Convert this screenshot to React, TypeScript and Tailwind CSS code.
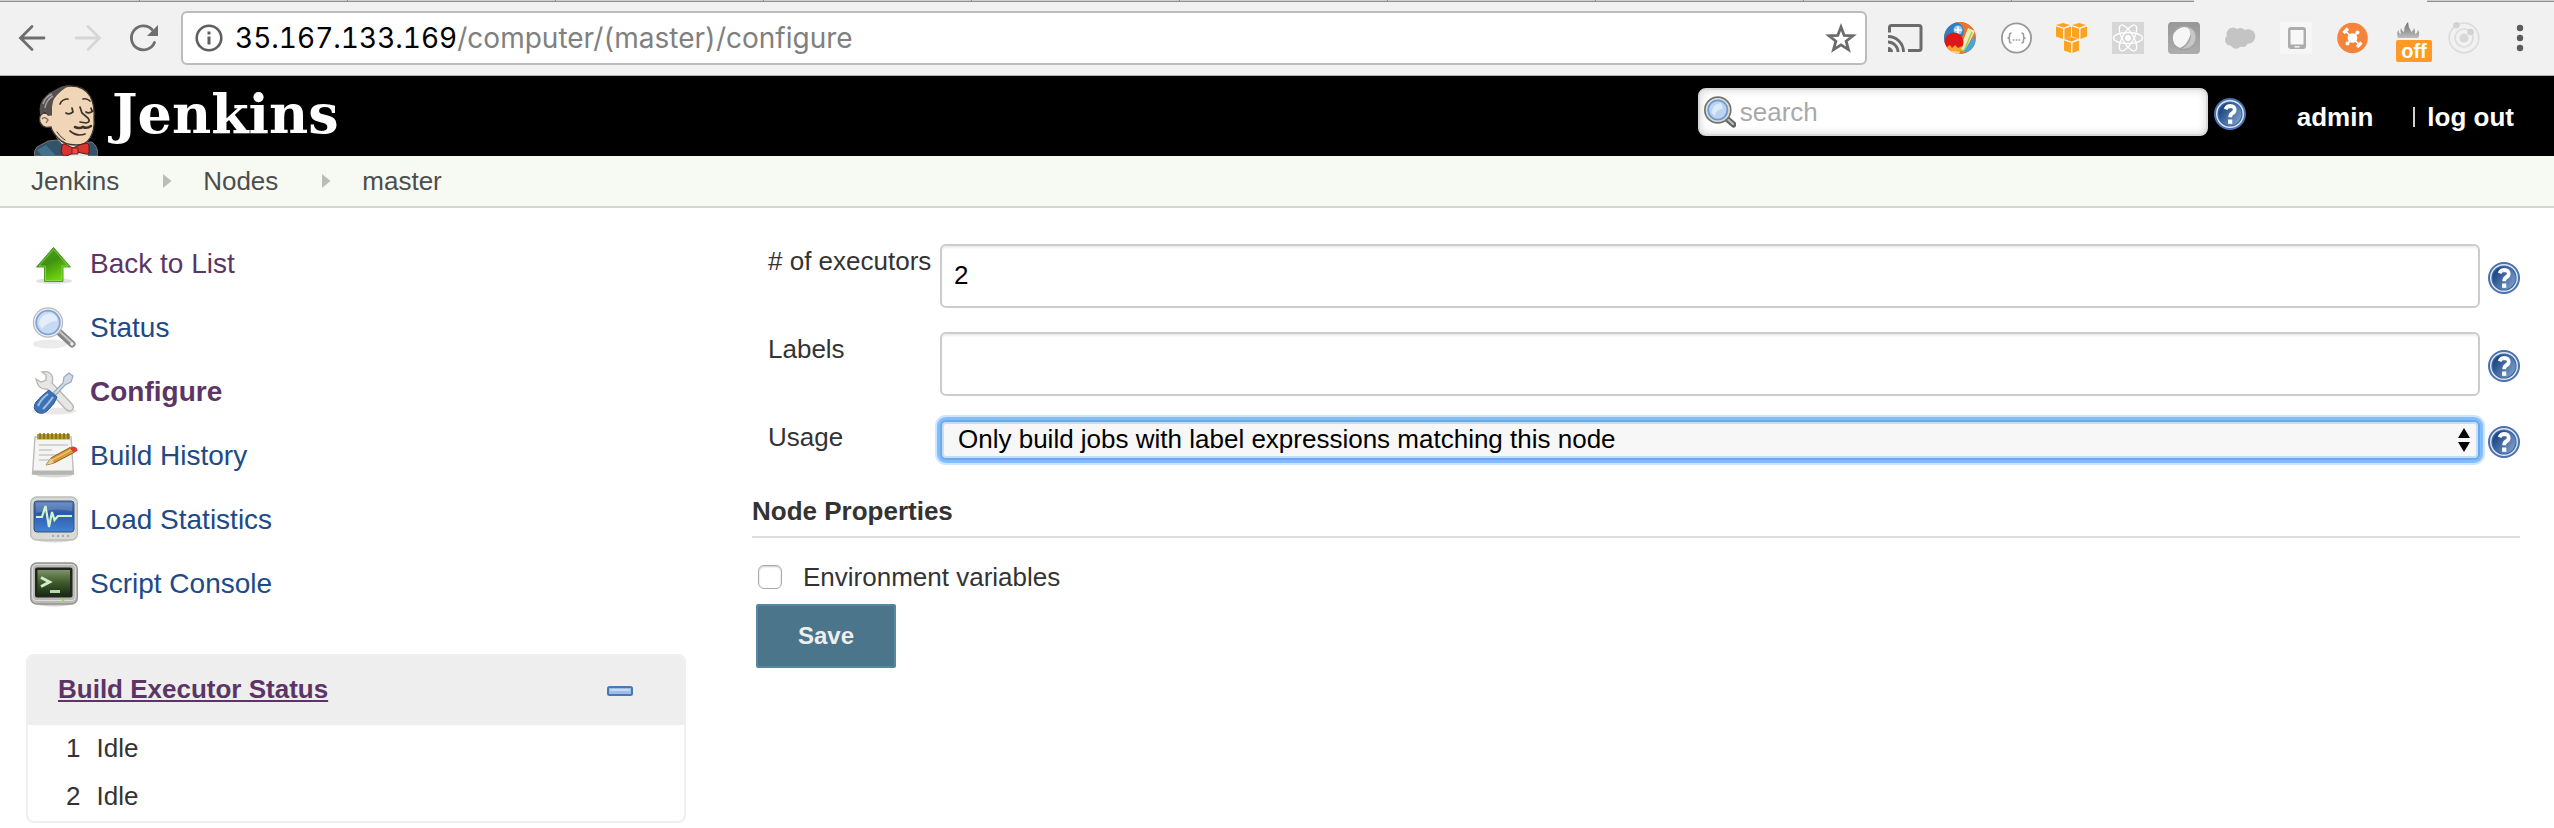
import React from "react";

type IconProps = { className?: string };

/* ---------- browser toolbar icons ---------- */

const BackIcon = () => (
  <svg viewBox="0 0 32 32" className="size-8" fill="none" stroke="#6e6e6e" strokeWidth="2.8" strokeLinecap="round">
    <path d="M28 16H5M16 4.500L4.500 16L16 27.500" />
  </svg>
);
const ForwardIcon = () => (
  <svg viewBox="0 0 32 32" className="size-8" fill="none" stroke="#d6d6d6" strokeWidth="2.800" strokeLinecap="round">
    <path d="M4 16H27M16 4.500L27.500 16L16 27.500" />
  </svg>
);
const ReloadIcon = () => (
  <svg viewBox="0 0 32 32" className="size-8" fill="none">
    <path d="M26.500 20.500A12 12 0 1 1 24 7.500" stroke="#6e6e6e" strokeWidth="2.800" strokeLinecap="round" />
    <path d="M30 3V14H19Z" fill="#6e6e6e" />
  </svg>
);
const InfoIcon = () => (
  <svg viewBox="0 0 28 28" className="size-7 shrink-0">
    <circle cx="14" cy="14" r="12.300" fill="none" stroke="#5f5f5f" strokeWidth="2.600" />
    <path d="M12.500 7.500h3v3h-3zM12.500 12.500h3v8h-3z" fill="#5f5f5f" />
  </svg>
);
const StarIcon = () => (
  <svg viewBox="0 0 32 32" className="size-8" fill="none" stroke="#6b6b6b" strokeWidth="2.800">
    <path d="M16 5L19.200 13.400L28 13.800L21.100 19.200L23.500 27.700L16 22.900L8.500 27.700L10.900 19.200L4 13.800L12.800 13.400Z" />
  </svg>
);
const CastIcon = () => (
  <svg viewBox="0 0 36 32" className="h-8 w-9" fill="none" stroke="#6b6b6b" strokeWidth="3">
    <path d="M1.500 10.500V5.500Q1.500 3.500 3.500 3.500H31Q33 3.500 33 5.500V26.500Q33 28.500 31 28.500H20" />
    <path d="M0 14.500A15.500 15.500 0 0 1 15.500 30M0 20A10 10 0 0 1 10 30" strokeWidth="2.800" />
    <path d="M0 25A5 5 0 0 1 5 30H0Z" fill="#6b6b6b" stroke="none" />
  </svg>
);
const PaletteIcon = () => (
  <svg viewBox="0 0 32 32" className="size-8">
    <defs>
      <clipPath id="ball"><circle cx="16" cy="16" r="16" /></clipPath>
    </defs>
    <g clipPath="url(#ball)">
      <rect width="32" height="32" fill="#e8723c" />
      <path d="M0 0H12Q22 3 19 14L8 14L0 22Z" fill="#2f7fc6" />
      <path d="M13 0Q24 3 23 11L32 8L22 0Z" fill="#e9762f" />
      <circle cx="14" cy="8" r="4.500" fill="#9cc9ee" />
      <path d="M14 4.500v7M10.500 8h7" stroke="#fff" strokeWidth="1.600" />
      <path d="M24 6L31 9L21 29L16 27Z" fill="#e9efb0" />
      <path d="M28 10L20 29L17 28" fill="none" stroke="#a9c85c" strokeWidth="1.500" />
      <path d="M30 14L32 26L22 32L20 29Z" fill="#4aa4d8" />
      <circle cx="10" cy="20" r="9.500" fill="#dc1818" />
      <path d="M3 25l3-2 2 3 3-3 3 3 4-2-2 7H5z" fill="#f8a52a" />
      <path d="M2 28L16 30L15 32H4Z" fill="#fbd49a" />
    </g>
  </svg>
);
const BracesIcon = () => (
  <svg viewBox="0 0 32 32" className="size-8" fill="none" stroke="#999">
    <circle cx="16.500" cy="16" r="14.600" fill="#fff" strokeWidth="1.800" />
    <path d="M11.500 11q-2 0-2 2v1.500q0 1.500-2 1.500q2 0 2 1.500V19q0 2 2 2M21.500 11q2 0 2 2v1.500q0 1.500 2 1.500q-2 0-2 1.500V19q0 2-2 2" strokeWidth="1.500" />
    <path d="M12.800 18h1.600M15.700 18h1.600M18.600 18h1.600" strokeWidth="1.600" />
  </svg>
);
const Cube = ({ x, y }: { x: number; y: number }) => (
  <g transform={`translate(${x} ${y})`} fill="#ffa31f">
    <path d="M0 2L7 0L14 2L7.500 4.500Z" />
    <path d="M0 3.500L7 5.800V16L0 13.500Z" />
    <path d="M8.500 5.800L15 3.500V13.500L8.500 16Z" />
  </g>
);
const CubesIcon = () => (
  <svg viewBox="0 0 32 32" className="size-8">
    <Cube x={0} y={1} />
    <Cube x={16} y={1} />
    <Cube x={8} y={15} />
  </svg>
);
const AtomIcon = () => (
  <svg viewBox="0 0 32 32" className="size-8" fill="none" stroke="#fff" strokeWidth="1.400">
    <rect width="32" height="32" fill="#d6d6d6" stroke="none" />
    <ellipse cx="16" cy="16" rx="14.500" ry="5.500" />
    <ellipse cx="16" cy="16" rx="14.500" ry="5.500" transform="rotate(60 16 16)" />
    <ellipse cx="16" cy="16" rx="14.500" ry="5.500" transform="rotate(120 16 16)" />
    <circle cx="16" cy="16" r="3" fill="#fff" stroke="none" />
  </svg>
);
const PebbleIcon = () => (
  <svg viewBox="0 0 32 32" className="size-8">
    <defs>
      <linearGradient id="pebble" x1="0" y1="0" x2="0" y2="1">
        <stop offset="0" stopColor="#979797" />
        <stop offset="1" stopColor="#adadad" />
      </linearGradient>
    </defs>
    <rect width="32" height="32" rx="4" fill="url(#pebble)" />
    <circle cx="16" cy="16" r="12.500" fill="#a3a3a3" />
    <path d="M19 5Q28 7 27.500 16Q27 26 14 27Q22 22 23 14Q23.500 8 19 5Z" fill="#c6c6c6" />
    <path d="M9 8Q14 4 19 5.500Q24 9 22 14Q19 23 12 26Q4 23 5 14Q6 10 9 8Z" fill="#f6f6f6" />
  </svg>
);
const CloudIcon = () => (
  <svg viewBox="0 0 32 32" className="size-8" fill="#c4c4c4">
    <circle cx="9" cy="12" r="6.500" />
    <circle cx="16.500" cy="11.500" r="5.500" />
    <circle cx="24" cy="14.500" r="7.300" />
    <circle cx="6.500" cy="18" r="5.500" />
    <circle cx="12" cy="21" r="5.800" />
    <circle cx="18.500" cy="19.500" r="5.500" />
  </svg>
);
const TabletIcon = () => (
  <svg viewBox="0 0 32 32" className="size-8">
    <rect width="32" height="32" fill="#f6f6f6" />
    <rect x="8" y="5" width="18" height="22" rx="3" fill="#acacac" />
    <rect x="10.500" y="8" width="13" height="14.500" fill="#f8f8f8" />
    <rect x="14.500" y="24" width="5" height="1.600" fill="#eee" />
  </svg>
);
const HubIcon = () => (
  <svg viewBox="0 0 32 32" className="size-8">
    <circle cx="16.500" cy="16" r="15.300" fill="#f5833a" />
    <g stroke="#fff" strokeWidth="1.700" fill="#fff">
      <path d="M9 8.500L24 23.500M21 11L12 21" />
      <circle cx="16.500" cy="16" r="4" />
      <circle cx="21.500" cy="10.500" r="1.200" />
      <circle cx="11.500" cy="21.500" r="1.200" />
      <path d="M7.500 11L12 6.500M21 25L25.500 20.500" strokeWidth="3.200" />
    </g>
  </svg>
);
const FlameIcon = () => (
  <svg viewBox="0 0 32 32" className="size-8">
    <defs>
      <linearGradient id="flame" x1="0" y1="0" x2="0" y2="1">
        <stop offset="0" stopColor="#6f6f6f" />
        <stop offset="1" stopColor="#bdbdbd" />
      </linearGradient>
    </defs>
    <path transform="translate(4 0)" d="M2 16Q0 11 2.500 8Q2.500 11 5 12Q4 8 5 6Q6 9 8 10Q8 4 12 0Q12 5 15.500 10Q18 8 18 6Q19.500 9 19 12Q21.500 11 22 8Q24.500 12 22 16Z" fill="url(#flame)" />
  </svg>
);
const OrbitIcon = () => (
  <svg viewBox="0 0 32 32" className="size-8" fill="none" stroke="#dcdcdc">
    <circle cx="16" cy="16" r="14.800" strokeWidth="1.700" />
    <circle cx="16" cy="16" r="9" strokeWidth="1.700" />
    <circle cx="16" cy="16" r="4.500" fill="#d8d8d8" stroke="none" />
    <circle cx="8.500" cy="3.300" r="3.300" fill="#d2d2d2" stroke="none" />
    <circle cx="22.500" cy="10" r="3.300" fill="#d2d2d2" stroke="none" />
  </svg>
);
const DotsIcon = () => (
  <svg viewBox="0 0 32 32" className="size-8" fill="#5c5c5c">
    <circle cx="16" cy="6" r="3.200" />
    <circle cx="16" cy="16" r="3.200" />
    <circle cx="16" cy="26" r="3.200" />
  </svg>
);

/* ---------- Jenkins artwork ---------- */

const Butler = () => (
  <svg viewBox="0 0 64 72" className="h-[72px] w-16 shrink-0">
    <path d="M0 72Q0 66 3 63L14 57L24 56L30 60L58 58Q64 62 64 72Z" fill="#33536a" stroke="#777" strokeWidth="1" />
    <path d="M3 66L12 61L22 72H8Z" fill="#44708c" />
    <path d="M22 53L28 60V72H54L52 57Z" fill="#e8e4de" />
    <path d="M18 10Q25 2 37 2Q50 2 56 12Q61 21 60 34Q61 46 56 54Q52 61 42 61Q30 61 24 54Q18 48 17 43Q9 45 6 38Q4 31 10 29L17 31Z" fill="#f0d6b7" stroke="#40362e" strokeWidth="1.300" />
    <path d="M19 7Q28 1 37 1Q26 6 20 15Q17 21 18 31L14 32L11 28L6 31Q4 18 12 12Q15 8 19 7Z" fill="#55504f" />
    <path d="M9 20Q11 13 18 10M11 24Q12 16 19 12" stroke="#a5a1a0" strokeWidth="1.500" fill="none" />
    <path d="M8 35Q11 32 14 36L12 39" stroke="#8a6f5a" strokeWidth="1.300" fill="none" />
    <g fill="none" stroke="#3b332c" strokeWidth="1.700" strokeLinecap="round">
      <path d="M26 20Q28 15 34 15M49 15Q53 14 56 17" />
      <path d="M32 29Q35 31 39 28M38 24L39 28M52 28Q55 30 59 27M57 24L58 27" />
      <path d="M46 23L48 29L54 34Q57 38 52 39L46 38" />
      <path d="M41 43Q45 45 49 43Q53 45 57 42" strokeWidth="2.600" />
      <path d="M36 47Q43 53 51 50" />
      <path d="M23 48Q27 54 31 56" strokeWidth="1" />
    </g>
    <path d="M28 62Q28 59 31 60L39 64Q46 60 53 59Q56 60 55 65Q56 71 52 70L43 68L32 72H29Q26 68 28 62Z" fill="#d93530" stroke="#5c1715" strokeWidth="1" />
    <path d="M38 64h6v6h-6z" fill="#ef4b45" stroke="#5c1715" strokeWidth="0.800" />
  </svg>
);

const HelpIcon = ({ className = "" }: IconProps) => (
  <svg viewBox="0 0 32 32" className={`size-8 shrink-0 ${className}`}>
    <defs>
      <linearGradient id="help" x1="0" y1="0.200" x2="1" y2="0.900">
        <stop offset="0.150" stopColor="#204a87" />
        <stop offset="1" stopColor="#86a8d2" />
      </linearGradient>
    </defs>
    <circle cx="16" cy="16" r="15" fill="#dfe8f4" stroke="#4b72ae" strokeWidth="2" />
    <circle cx="16" cy="16" r="12" fill="url(#help)" stroke="#3f68a8" strokeWidth="1.200" />
    <path d="M11.500 11.200Q13 8 16.300 8Q21 8.200 20.700 12Q20.500 14.200 18 15.500Q16.200 16.500 16.200 19.300" fill="none" stroke="#fff" strokeWidth="3.800" />
    <path d="M14.100 21.500h4.200v4.300h-4.200z" fill="#fff" />
  </svg>
);

const SearchGlyph = () => (
  <svg viewBox="0 0 32 32" className="size-8">
    <path d="M22 22L29.500 28.500" stroke="#666" strokeWidth="6" strokeLinecap="round" />
    <path d="M24 23.500L29 28" stroke="#bbb" strokeWidth="2" strokeLinecap="round" />
    <circle cx="13.800" cy="14" r="12.800" fill="#a9c9ee" stroke="#73736d" strokeWidth="2" />
    <circle cx="13.800" cy="14" r="11.200" fill="none" stroke="#dadad6" strokeWidth="1.800" />
    <circle cx="13.800" cy="14" r="9.600" fill="#bcd4f0" stroke="#6f9bd1" strokeWidth="1.800" />
    <path d="M8 17Q8 8 17 7L19 13Q12 13 11 20Z" fill="#dce9f8" />
  </svg>
);

const UpIcon = () => (
  <svg viewBox="0 0 48 48" className="size-12">
    <defs>
      <linearGradient id="up" x1="0" y1="0" x2="0.500" y2="1">
        <stop offset="0" stopColor="#4aa21a" />
        <stop offset="0.500" stopColor="#3f9210" />
        <stop offset="1" stopColor="#6fd60d" />
      </linearGradient>
    </defs>
    <ellipse cx="24" cy="41" rx="18" ry="3" fill="#000" opacity="0.120" />
    <path d="M23.500 7.500L40.500 27H33V41.500H14.500V27H6.500Z" fill="url(#up)" stroke="#4f9e22" strokeWidth="1" strokeLinejoin="round" />
    <path d="M23.500 9.500L38 26H32V40.500H15.500V26H9Z" fill="none" stroke="#9be06a" strokeWidth="0.900" opacity="0.700" />
  </svg>
);
const MagnifierIcon = () => (
  <svg viewBox="0 0 48 48" className="size-12">
    <ellipse cx="20" cy="40" rx="17" ry="4.500" fill="#000" opacity="0.080" />
    <path d="M29 28L42 40" stroke="#858585" strokeWidth="7" strokeLinecap="round" />
    <path d="M29 27L42 39" stroke="#c9c9c9" strokeWidth="2" strokeLinecap="round" />
    <circle cx="42" cy="40" r="1.800" fill="#eee" />
    <circle cx="18" cy="18.500" r="14.600" fill="#ededed" stroke="#b9b9b9" strokeWidth="1.200" />
    <circle cx="18" cy="18.500" r="11.800" fill="#c6dbf2" stroke="#7ea4d8" strokeWidth="1.800" />
    <path d="M9 20Q10 10 20 9.500Q28 11 27 17Q18 17 12 25Z" fill="#e3eefa" />
  </svg>
);
const ToolsIcon = () => (
  <svg viewBox="0 0 48 48" className="size-12">
    <ellipse cx="24" cy="43" rx="22" ry="3.500" fill="#000" opacity="0.090" />
    <path d="M6 11L11 14L16 12L16 7L12 4Q20 2 22.500 9Q23 13 22 15L42 36Q45 40 41.500 42.500Q38.500 44 35.500 41L17 21Q8 22 6 11Z" fill="#e6e6e4" stroke="#b5b5b2" strokeWidth="1.300" />
    <path d="M23 25L33 15L34 9L39 5L43 8L41 14L35 17L26 27Z" fill="#cfdae6" stroke="#9aaabd" strokeWidth="1.200" />
    <path d="M19 22L27 29Q25 36 17 43Q12 47 7 44Q2 40 6 34Q12 27 19 22Z" fill="#3f72b5" stroke="#2f5c9c" strokeWidth="1" />
    <path d="M18 26Q11 31 8 38M23 29Q18 36 13 41" stroke="#9fc0ea" strokeWidth="2" fill="none" />
  </svg>
);
const NotepadIcon = () => (
  <svg viewBox="0 0 48 48" className="size-12">
    <ellipse cx="24" cy="43" rx="18" ry="2.500" fill="#000" opacity="0.150" />
    <path d="M5 5H41L43.500 42H2.500Z" fill="#f4f4f3" stroke="#bdbdba" strokeWidth="1.400" />
    <path d="M3 38.500H43.500V42.500H2.500Z" fill="#b5b5b2" />
    <path d="M7 2H40V7.500H7Z" fill="#b89b2a" />
    <path d="M10 1V7M14 1V7M18 1V7M22 1V7M26 1V7M30 1V7M34 1V7M38 1V7" stroke="#7d6a1c" strokeWidth="1.400" />
    <path d="M9 13H38M9 18H22M9 23H27M9 28H19" stroke="#c9c9c8" strokeWidth="1.500" />
    <path d="M16 33L21 26L40 15.500L44 20.500L24 31Z" fill="#d99a38" stroke="#8f5d17" strokeWidth="1" />
    <path d="M21 26L24 31L16 33Z" fill="#e9cb97" />
    <path d="M40 15.500L43 14.500Q48 15 47.500 19L44 20.500Z" fill="#e03a3a" />
    <path d="M22 28L41 18" stroke="#f5c981" strokeWidth="1.200" />
  </svg>
);
const MonitorIcon = () => (
  <svg viewBox="0 0 48 48" className="size-12">
    <defs>
      <linearGradient id="scope" x1="0" y1="0" x2="0" y2="1">
        <stop offset="0" stopColor="#5c7fb8" />
        <stop offset="0.400" stopColor="#2c5aa6" />
        <stop offset="1" stopColor="#4383d6" />
      </linearGradient>
    </defs>
    <ellipse cx="24" cy="44" rx="16" ry="2.500" fill="#000" opacity="0.150" />
    <rect x="0.700" y="1" width="46.600" height="43" rx="6" fill="#d9dad6" stroke="#bcbdb8" strokeWidth="1.400" />
    <rect x="4" y="5" width="40" height="31" rx="3" fill="url(#scope)" stroke="#33507f" strokeWidth="1" />
    <path d="M6 7H42V15Q24 11 6 17Z" fill="#fff" opacity="0.150" />
    <path d="M6 21H12L15.500 10L19 31L22 16L24.500 24L28 20H42" fill="none" stroke="#d3f3d0" strokeWidth="2.200" />
    <path d="M22 40h2M27 40h2M32 40h2M37 40h2" stroke="#aaa" strokeWidth="2" />
  </svg>
);
const TerminalIcon = () => (
  <svg viewBox="0 0 48 48" className="size-12">
    <defs>
      <linearGradient id="term" x1="0" y1="0" x2="0" y2="1">
        <stop offset="0" stopColor="#7c9468" />
        <stop offset="0.500" stopColor="#3f5a2b" />
        <stop offset="1" stopColor="#1a2c12" />
      </linearGradient>
    </defs>
    <ellipse cx="24" cy="44" rx="16" ry="2.500" fill="#000" opacity="0.180" />
    <rect x="0.700" y="3" width="46.600" height="41" rx="6" fill="#b9bab5" stroke="#94958f" strokeWidth="1.400" />
    <rect x="2.500" y="4.500" width="43" height="36" rx="4" fill="none" stroke="#dcdcd9" strokeWidth="1.200" />
    <rect x="5" y="7.500" width="37.500" height="30" rx="2" fill="#20251d" />
    <rect x="7.500" y="10" width="32.500" height="25" fill="url(#term)" />
    <path d="M11 17.500L19.500 22L11 26.500" fill="none" stroke="#cfeccb" strokeWidth="3" />
    <path d="M20 31.500H30" stroke="#b6d8b1" strokeWidth="3" />
    <circle cx="33" cy="39.500" r="1.600" fill="#8ae234" />
  </svg>
);

/* ---------- data ---------- */

const extensions = [
  { name: "Cast", icon: <CastIcon /> },
  { name: "Color tools", icon: <PaletteIcon /> },
  { name: "JSON viewer", icon: <BracesIcon /> },
  { name: "Cloud cubes", icon: <CubesIcon /> },
  { name: "React tools", icon: <AtomIcon /> },
  { name: "Pebble", icon: <PebbleIcon /> },
  { name: "Cloud", icon: <CloudIcon /> },
  { name: "Device preview", icon: <TabletIcon /> },
  { name: "Hub", icon: <HubIcon /> },
  { name: "Flame", icon: <FlameIcon />, badge: "off" },
  { name: "Orbit", icon: <OrbitIcon /> },
];

const tasks = [
  { label: "Back to List", icon: <UpIcon />, tone: "text-[#5c3566]" },
  { label: "Status", icon: <MagnifierIcon />, tone: "text-[#204a87]" },
  { label: "Configure", icon: <ToolsIcon />, tone: "font-bold text-[#5c3566]" },
  { label: "Build History", icon: <NotepadIcon />, tone: "text-[#204a87]" },
  { label: "Load Statistics", icon: <MonitorIcon />, tone: "text-[#204a87]" },
  { label: "Script Console", icon: <TerminalIcon />, tone: "text-[#204a87]" },
];

const crumbs = ["Jenkins", "Nodes", "master"];
const executors = [1, 2];

/* ---------- sections ---------- */

function TabStrip() {
  const edge = "h-0.5 border-b border-[#8e8e8e] bg-[#cfcfcf]";
  return (
    <div className="flex h-0.5 bg-[#f1f1f1]">
      <div className={`${edge} w-[140px] border-r`} />
      {[0, 1, 2, 3, 4, 5, 6, 7, 8].map((n) => (
        <div key={n} className={`${edge} w-[208px] border-r`} />
      ))}
      <div className={`${edge} w-[182px]`} />
      <div className="w-[233px]" />
      <div className={`${edge} flex-1`} />
    </div>
  );
}

function Toolbar() {
  return (
    <div className="flex items-center border-b border-[#a9b0a9] bg-[#f1f1f1] pt-[9px] pr-[18px] pb-2.5 pl-4">
      <div className="flex gap-6">
        <button aria-label="Back"><BackIcon /></button>
        <button aria-label="Forward"><ForwardIcon /></button>
        <button aria-label="Reload"><ReloadIcon /></button>
      </div>
      <div className="ml-[21px] flex h-[54px] flex-1 items-center gap-3 rounded-md border-2 border-[#bcbcbc] bg-white pr-2 pl-3">
        <InfoIcon />
        <div className="flex-1 font-['Inter',sans-serif] text-[28px] leading-8 text-[#808080] tabular-nums">
          <span className="text-black">35.167.133.169</span>/computer/(master)/configure
        </div>
        <button aria-label="Bookmark this page"><StarIcon /></button>
      </div>
      <div className="ml-[21px] flex gap-6">
        {extensions.map((e) => (
          <button key={e.name} aria-label={e.name} className="relative size-8">
            {e.icon}
            {e.badge && (
              <span className="absolute top-[18px] left-1 flex h-[22px] w-9 items-center justify-center rounded-xs bg-[#ff9a26] text-xl leading-5 font-bold text-white">
                {e.badge}
              </span>
            )}
          </button>
        ))}
        <button aria-label="Menu"><DotsIcon /></button>
      </div>
    </div>
  );
}

function Header() {
  return (
    <header className="flex h-20 items-start bg-black pr-10 pl-[34px]">
      <a href="#" className="flex items-start pt-2 text-white">
        <Butler />
        <span className="ml-3.5 font-['DejaVu_Serif',serif] text-[54px] leading-[60px] font-bold">Jenkins</span>
      </a>
      <div className="ml-auto flex items-center pt-3">
        <div className="relative">
          <span className="absolute top-2 left-1.5"><SearchGlyph /></span>
          <input
            type="search"
            aria-label="Search"
            placeholder="search"
            className="block h-12 w-[510px] rounded-lg border-2 border-[#d8d8d8] bg-white pl-10 text-[26px] text-black shadow-[inset_0_0_8px_#d5d5d5] placeholder:text-[#a9a9a9]"
          />
        </div>
        <a href="#" aria-label="Search help" className="ml-1.5 pt-1"><HelpIcon /></a>
      </div>
      <nav className="ml-[51px] flex items-center pt-[25px] text-[26px] leading-8 font-bold text-white">
        <a href="#">admin</a>
        <span className="ml-10 h-5 w-0.5 bg-[#d0d0d0]" />
        <a href="#" className="ml-3">log out</a>
      </nav>
    </header>
  );
}

function Breadcrumbs() {
  return (
    <nav aria-label="Breadcrumb" className="border-b-2 border-[#d3d7cf] bg-[#f6faf2]">
      <ul className="flex h-[50px] items-center pl-[31px] text-[26px] leading-8 text-[#4d4d4d]">
        {crumbs.map((c, i) => (
          <li key={c} className="flex items-center">
            {i > 0 && (
              <svg viewBox="0 0 10 16" className="mr-[31px] ml-[43px] h-4 w-2.5"><path d="M1 1L9.500 8L1 15Z" fill="#babdb6" /></svg>
            )}
            <a href="#">{c}</a>
          </li>
        ))}
      </ul>
    </nav>
  );
}

function Sidebar() {
  return (
    <aside className="w-[660px] shrink-0 pt-6">
      <ul>
        {tasks.map((t) => (
          <li key={t.label} className="h-16">
            <a href="#" className={`flex h-full items-center gap-3 pl-1 text-[28px] leading-8 ${t.tone}`}>
              {t.icon}
              {t.label}
            </a>
          </li>
        ))}
      </ul>
      <section className="mt-[38px] overflow-hidden rounded-lg border-2 border-[#efefef]">
        <div className="flex h-[69px] items-center justify-between bg-[#eee] pr-[51px] pb-1 pl-[30px]">
          <a href="#" className="text-[26px] leading-8 font-bold text-[#5c3566] underline decoration-2 underline-offset-2">
            Build Executor Status
          </a>
          <button aria-label="Collapse" className="pt-1">
            <svg viewBox="0 0 26 10" className="h-2.5 w-[26px]">
              <rect x="1" y="1" width="24" height="8" rx="1.500" fill="#9dbde6" stroke="#4878b6" strokeWidth="2" />
              <path d="M3 4H23" stroke="#c7daf3" strokeWidth="2" />
            </svg>
          </button>
        </div>
        <table className="w-full text-[26px] leading-8 text-[#333]">
          <tbody>
            {executors.map((n) => (
              <tr key={n} className="h-12">
                <td className="w-[68px] pt-0 pr-4 pb-0.5 pl-[38px]">{n}</td>
                <td className="pt-0 pb-0.5">Idle</td>
              </tr>
            ))}
          </tbody>
        </table>
      </section>
    </aside>
  );
}

function Row({ id, label, children }: { id: string; label: string; children: React.ReactNode }) {
  return (
    <div className="mb-6 flex items-center">
      <label htmlFor={id} className="w-[188px] shrink-0 self-start pl-4 leading-[34px] whitespace-nowrap">
        {label}
      </label>
      <div className="relative flex-1">{children}</div>
      <a href="#" aria-label={`Help for ${label}`} className="mt-1 ml-2"><HelpIcon /></a>
    </div>
  );
}

const field =
  "block h-16 w-full rounded-md border-2 border-[#ccc] bg-white px-3 pb-0.5 text-black shadow-[inset_0_2px_2px_#eee]";

function ConfigForm() {
  return (
    <form className="flex-1 pt-9 text-[26px] text-[#333]" onSubmit={(e) => e.preventDefault()}>
      <Row id="executors" label="# of executors">
        <input id="executors" type="text" defaultValue="2" className={field} />
      </Row>
      <Row id="labels" label="Labels">
        <input id="labels" type="text" className={field} />
      </Row>
      <Row id="usage" label="Usage">
        <select
          id="usage"
          className="block h-10 w-full appearance-none rounded-md border-2 border-[#6ca8ec] bg-[#f7f7f7] pb-0.5 pl-4 leading-8 text-black shadow-[0_0_0_3px_#84bdff,0_0_0_5px_#cde5ff,inset_0_0_0_2px_#c3dff8] outline-none"
        >
          <option>Only build jobs with label expressions matching this node</option>
          <option>Use this node as much as possible</option>
        </select>
        <svg viewBox="0 0 12 24" className="pointer-events-none absolute top-2 right-2.5 h-6 w-3">
          <path d="M6 0L12 10H0ZM6 24L0 14H12Z" fill="#000" />
        </svg>
      </Row>
      <h2 className="mt-[34px] border-b-2 border-[#ddd] pb-2 leading-[34px] font-bold">Node Properties</h2>
      <label className="mt-[22px] flex items-center gap-[21px] pl-1.5 leading-[34px]">
        <input
          type="checkbox"
          className="size-6 appearance-none rounded-md border border-[#a8a8a8] bg-white shadow-[inset_0_1px_2px_#ccc]"
        />
        Environment variables
      </label>
      <button
        type="submit"
        className="mt-[10px] ml-1 h-16 rounded-xs border-2 border-[#5788a1] bg-[#4b758b] px-10 text-2xl font-bold text-[#eee]"
      >
        Save
      </button>
    </form>
  );
}

export default function App() {
  return (
    <div className="min-h-screen bg-white font-['Liberation_Sans',Arial,sans-serif]">
      <TabStrip />
      <Toolbar />
      <Header />
      <Breadcrumbs />
      <div className="flex gap-[66px] pr-[34px] pl-[26px]">
        <Sidebar />
        <ConfigForm />
      </div>
    </div>
  );
}
